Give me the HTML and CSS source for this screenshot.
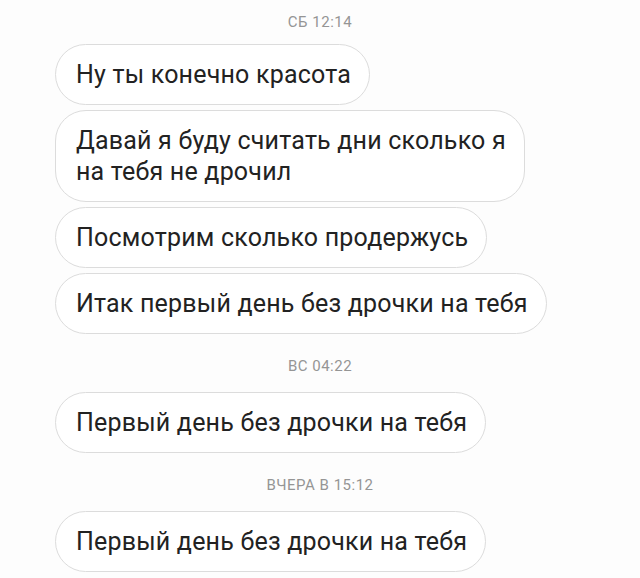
FILE: index.html
```html
<!DOCTYPE html>
<html lang="ru">
<head>
    <meta charset="UTF-8">
    <meta name="viewport" content="width=device-width, initial-scale=1.0">
    <title>Сообщения</title>
    <link rel="stylesheet" href="styles.css">
</head>
<body>

    <div class="chat">
        <p class="time">СБ 12:14</p>
        <div class="msg">Ну ты конечно красота</div>
        <div class="msg">Давай я буду считать дни сколько я<br>на тебя не дрочил</div>
        <div class="msg">Посмотрим сколько продержусь</div>
        <div class="msg">Итак первый день без дрочки на тебя</div>

        <p class="time">ВС 04:22</p>
        <div class="msg">Первый день без дрочки на тебя</div>

        <p class="time">ВЧЕРА В 15:12</p>
        <div class="msg">Первый день без дрочки на тебя</div>
    </div>

</body>
</html>
```

FILE: styles.css
```css
body {
    margin: 0;
    background-color: #fdfdfd;
    font-family: Roboto, "Noto Sans", sans-serif;
    color: #222;
}

.chat {
    display: flex;
    flex-direction: column;
    align-items: flex-start;
    gap: 5px;
    padding: 14px 0 0 55px;
}

.time {
    align-self: stretch;
    margin: 19px 55px 13px 0;
    height: 16px;
    line-height: 16px;
    font-size: 15px;
    letter-spacing: 0.5px;
    color: #959595;
    text-align: center;
}

.time:first-child {
    margin-top: 0;
    margin-bottom: 9px;
}

.msg {
    box-sizing: border-box;
    padding: 14px 18px 14px 20px;
    border: 1px solid #dcdcdc;
    border-radius: 31px;
    background: #fff;
    font-size: 25px;
    letter-spacing: 0.2px;
    line-height: 31px;
    white-space: nowrap;
}
```
